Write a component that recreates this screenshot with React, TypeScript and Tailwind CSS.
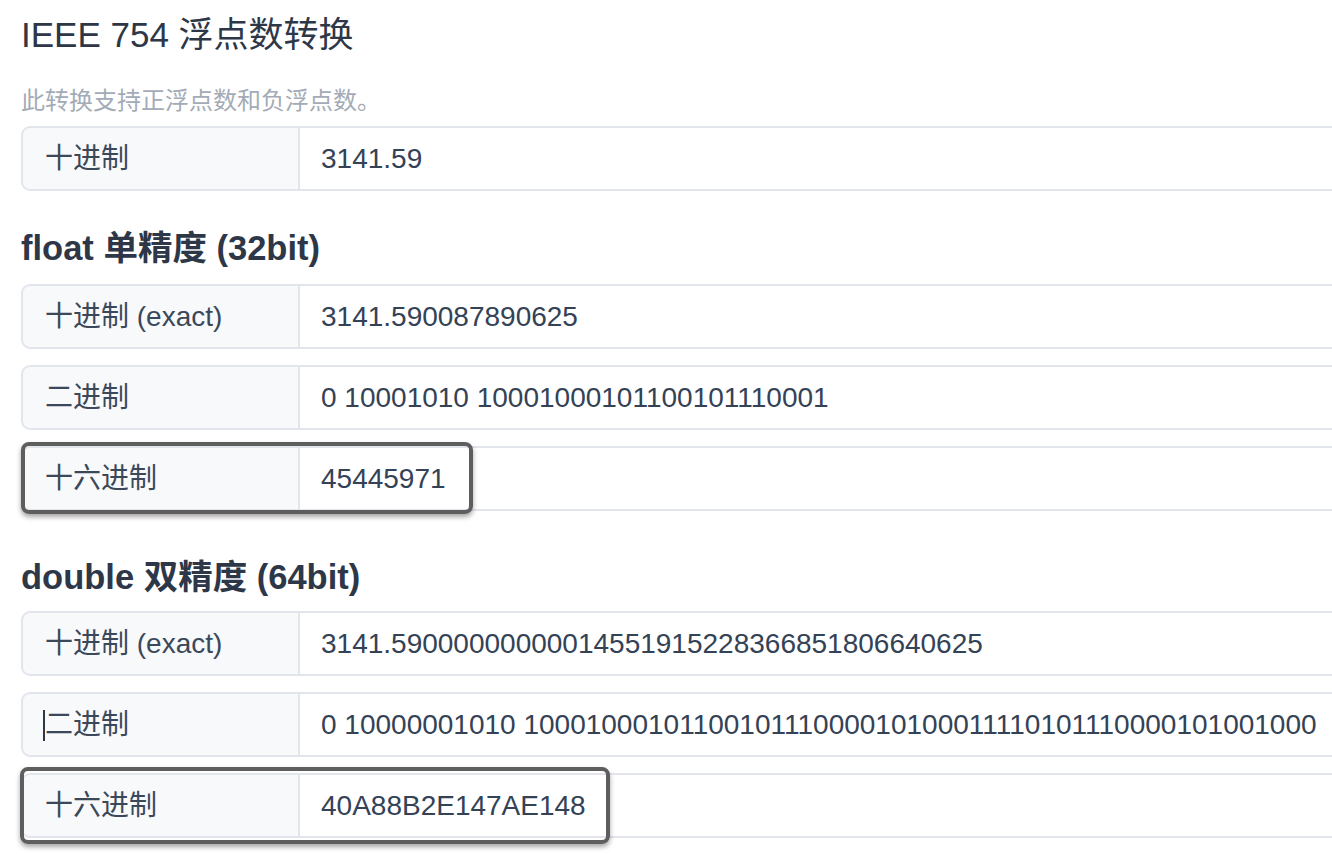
import React from "react";

const FONT = '"Liberation Sans", Arial, "Noto Sans CJK SC", sans-serif';

type RowProps = {
  label: string;
  value: string;
  className?: string;
  highlight?: string;
  caret?: boolean;
};

function Row({ label, value, className = "", highlight, caret }: RowProps) {
  return (
    <div className={`relative flex h-[65px] w-[1400px] ${className}`}>
      <div className="relative flex w-[279px] shrink-0 items-center rounded-l-[9px] border-2 border-[#e2e6ec] bg-[#f7f9fb] pl-[22px] text-[28px] text-[#3b4859]">
        {caret && (
          <span className="absolute left-[20px] top-[16px] h-[31px] w-[2px] bg-[#2d3748]" />
        )}
        {label}
      </div>
      <div className="flex flex-1 items-center border-y-2 border-[#e2e6ec] bg-white pl-[21px] text-[28px] text-[#344256]">
        {value}
      </div>
      {highlight && (
        <div
          className={`pointer-events-none absolute rounded-[8px] border-[4px] border-[#5e5e5e] shadow-[0_3px_5px_rgba(0,0,0,0.35)] ${highlight}`}
        />
      )}
    </div>
  );
}

export default function App() {
  return (
    <div
      className="h-[854px] w-[1332px] overflow-hidden bg-white pl-[21px]"
      style={{ fontFamily: FONT }}
    >
      <h1 className="mt-[15px] h-[40px] text-[35px] leading-[40px] font-normal text-[#2d3748]">
        IEEE 754 浮点数转换
      </h1>
      <p className="mt-[31px] h-[30px] text-[24px] leading-[30px] text-[#a3abb6]">
        此转换支持正浮点数和负浮点数。
      </p>
      <Row className="mt-[10px]" label="十进制" value="3141.59" />

      <h2 className="mt-[37px] h-[40px] text-[34.5px] leading-[40px] font-bold text-[#2d3748]">
        float 单精度 (32bit)
      </h2>
      <Row className="mt-[16px]" label="十进制 (exact)" value="3141.590087890625" />
      <Row
        className="mt-[16px]"
        label="二进制"
        value="0 10001010 10001000101100101110001"
      />
      <Row
        className="mt-[16px]"
        label="十六进制"
        value="45445971"
        highlight="left-[0px] top-[-4px] h-[72px] w-[452px]"
      />

      <h2 className="mt-[46px] h-[40px] text-[34.5px] leading-[40px] font-bold text-[#2d3748]">
        double 双精度 (64bit)
      </h2>
      <Row
        className="mt-[14px]"
        label="十进制 (exact)"
        value="3141.59000000000014551915228366851806640625"
      />
      <Row
        className="mt-[16px]"
        label="二进制"
        caret
        value="0 10000001010 1000100010110010111000010100011110101110000101001000"
      />
      <Row
        className="mt-[16px]"
        label="十六进制"
        value="40A88B2E147AE148"
        highlight="left-[-1px] top-[-6px] h-[77px] w-[590px]"
      />
    </div>
  );
}
